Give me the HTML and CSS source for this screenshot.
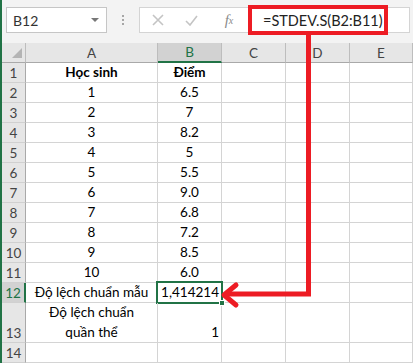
FILE: index.html
```html
<!DOCTYPE html>
<html lang="vi">
<head>
  <meta charset="UTF-8">
  <meta name="viewport" content="width=device-width, initial-scale=1.0">
  <title>STDEV.S</title>
  <link rel="stylesheet" href="styles.css">
</head>
<body>
  <div class="app">
    <div class="toolbar">
      <div class="namebox">
        <span>B12</span>
        <span class="caret"></span>
      </div>
      <div class="grip"><i></i><i></i><i></i></div>
      <div class="formula">
        <span class="fbtn cancel">
          <svg width="12" height="12" viewBox="0 0 12 12"><path d="M1 1 L11 11 M11 1 L1 11" stroke="#c4c4c4" stroke-width="1.6" fill="none"/></svg>
        </span>
        <span class="fbtn enter">
          <svg width="13" height="11" viewBox="0 0 13 11"><path d="M1 6 L5 10 L12 1" stroke="#c4c4c4" stroke-width="1.6" fill="none"/></svg>
        </span>
        <span class="fbtn fx">f<sub>x</sub></span>
        <div class="formula-input">=STDEV.S(B2:B11)</div>
      </div>
    </div>

    <div class="sheet">
      <div class="hd corner"><span class="select-all"></span></div>
      <div class="hd col">A</div>
      <div class="hd col active">B</div>
      <div class="hd col">C</div>
      <div class="hd col">D</div>
      <div class="hd col">E</div>

      <div class="hd row">1</div>
      <div class="c center bold">Học sinh</div>
      <div class="c center bold">Điểm</div>
      <div class="c"></div><div class="c"></div><div class="c"></div>

      <div class="hd row">2</div>
      <div class="c center">1</div><div class="c center">6.5</div>
      <div class="c"></div><div class="c"></div><div class="c"></div>

      <div class="hd row">3</div>
      <div class="c center">2</div><div class="c center">7</div>
      <div class="c"></div><div class="c"></div><div class="c"></div>

      <div class="hd row">4</div>
      <div class="c center">3</div><div class="c center">8.2</div>
      <div class="c"></div><div class="c"></div><div class="c"></div>

      <div class="hd row">5</div>
      <div class="c center">4</div><div class="c center">5</div>
      <div class="c"></div><div class="c"></div><div class="c"></div>

      <div class="hd row">6</div>
      <div class="c center">5</div><div class="c center">5.5</div>
      <div class="c"></div><div class="c"></div><div class="c"></div>

      <div class="hd row">7</div>
      <div class="c center">6</div><div class="c center">9.0</div>
      <div class="c"></div><div class="c"></div><div class="c"></div>

      <div class="hd row">8</div>
      <div class="c center">7</div><div class="c center">6.8</div>
      <div class="c"></div><div class="c"></div><div class="c"></div>

      <div class="hd row">9</div>
      <div class="c center">8</div><div class="c center">7.2</div>
      <div class="c"></div><div class="c"></div><div class="c"></div>

      <div class="hd row">10</div>
      <div class="c center">9</div><div class="c center">8.5</div>
      <div class="c"></div><div class="c"></div><div class="c"></div>

      <div class="hd row">11</div>
      <div class="c center">10</div><div class="c center">6.0</div>
      <div class="c"></div><div class="c"></div><div class="c"></div>

      <div class="hd row active">12</div>
      <div class="c center">Độ lệch chuẩn mẫu</div>
      <div class="c right selected">1,414214<span class="handle"></span></div>
      <div class="c"></div><div class="c"></div><div class="c"></div>

      <div class="hd row">13</div>
      <div class="c center wrap">Độ lệch chuẩn quần thể</div>
      <div class="c right">1</div>
      <div class="c"></div><div class="c"></div><div class="c"></div>

      <div class="hd row">14</div>
      <div class="c"></div><div class="c"></div>
      <div class="c"></div><div class="c"></div><div class="c"></div>
    </div>

    <div class="callout"></div>
    <svg class="arrow" width="413" height="363" viewBox="0 0 413 363">
      <path d="M308.5 33 L308.5 294 L226 294" stroke="#ed1c24" stroke-width="5" fill="none"/>
      <path d="M236 285 L224 295 L236 305" stroke="#ed1c24" stroke-width="5" fill="none" stroke-linecap="round" stroke-linejoin="round"/>
    </svg>
  </div>
</body>
</html>
```

FILE: styles.css
```css
* {
  margin: 0;
  padding: 0;
  box-sizing: border-box;
}
body {
  width: 413px;
  height: 363px;
  overflow: hidden;
  background: #fff;
  font-family: Lato, "Liberation Sans", sans-serif;
}
.app {
  position: relative;
  height: 363px;
  border-left: 2px solid #217346;
}

/* formula bar */
.toolbar {
  height: 43px;
  display: flex;
  align-items: flex-start;
  padding: 7px 3px 0 4px;
  background: #f3f3f3;
}
.namebox {
  width: 101px;
  height: 26px;
  background: #fff;
  border: 1px solid #c6c6c6;
  display: flex;
  align-items: center;
  justify-content: space-between;
  padding: 0 7px 0 6px;
  font-size: 14px;
  color: #333;
}
.caret {
  width: 0;
  height: 0;
  border-left: 4px solid transparent;
  border-right: 4px solid transparent;
  border-top: 4px solid #777;
}
.grip {
  width: 32px;
  height: 26px;
  display: flex;
  flex-direction: column;
  align-items: center;
  justify-content: center;
  gap: 2px;
}
.grip i {
  width: 2px;
  height: 2px;
  background: #a6a6a6;
}
.formula {
  flex: 1;
  height: 26px;
  background: #fff;
  border: 1px solid #d4d4d4;
  display: flex;
  align-items: center;
}
.fbtn {
  display: flex;
  justify-content: center;
  align-items: center;
  height: 24px;
}
.cancel { width: 35px; }
.enter { width: 32px; }
.fx {
  width: 44px;
  font-family: "Liberation Serif", serif;
  font-style: italic;
  font-size: 15px;
  color: #8a8a8a;
}
.fx sub {
  font-size: 10px;
  vertical-align: -1px;
}
.formula-input {
  padding-left: 12px;
  font-size: 14.5px;
  color: #222;
}
.callout {
  position: absolute;
  left: 246px;
  top: 5px;
  width: 140px;
  height: 30px;
  border: 4px solid #ed1c24;
}
.arrow {
  position: absolute;
  left: -2px;
  top: 0;
  pointer-events: none;
}

/* sheet */
.sheet {
  display: grid;
  grid-template-columns: 24px 132px 64px 64px 64px 1fr;
  grid-template-rows: repeat(13, 20px) 40px 20px;
}
.hd {
  background: #e6e6e6;
  color: #444;
  font-size: 13.5px;
  display: flex;
  align-items: center;
  justify-content: center;
  border-right: 1px solid #bdbdbd;
  border-bottom: 1px solid #d0d0d0;
}
.hd.col {
  border-bottom: 1px solid #a9a9a9;
}
.hd.corner {
  position: relative;
  border-bottom: 1px solid #a9a9a9;
}
.select-all {
  position: absolute;
  right: 3px;
  bottom: 4px;
  width: 0;
  height: 0;
  border-left: 10px solid transparent;
  border-bottom: 10px solid #b4b4b4;
}
.hd.row {
  align-items: flex-end;
  padding-bottom: 1px;
  border-right: 1px solid #a9a9a9;
}
.hd.active {
  background: #d2d2d2;
  color: #217346;
}
.hd.col.active {
  border-bottom: 2px solid #217346;
}
.hd.row.active {
  border-right: 2px solid #217346;
}
.c {
  position: relative;
  display: flex;
  align-items: flex-end;
  padding: 0 2px 1px;
  font-size: 13.5px;
  line-height: 18px;
  color: #000;
  border-right: 1px solid #d4d4d4;
  border-bottom: 1px solid #d4d4d4;
  white-space: nowrap;
}
.center { justify-content: center; text-align: center; }
.right { justify-content: flex-end; }
.bold { font-weight: bold; }
.wrap {
  white-space: normal;
  padding: 0 14px 0;
  line-height: 20px;
}
.selected::after {
  content: "";
  position: absolute;
  left: -2px;
  top: -2px;
  right: -2px;
  bottom: -2px;
  border: 2px solid #217346;
}
.handle {
  position: absolute;
  right: -4px;
  bottom: -4px;
  width: 6px;
  height: 6px;
  background: #217346;
  border: 1px solid #fff;
  z-index: 1;
}
```
